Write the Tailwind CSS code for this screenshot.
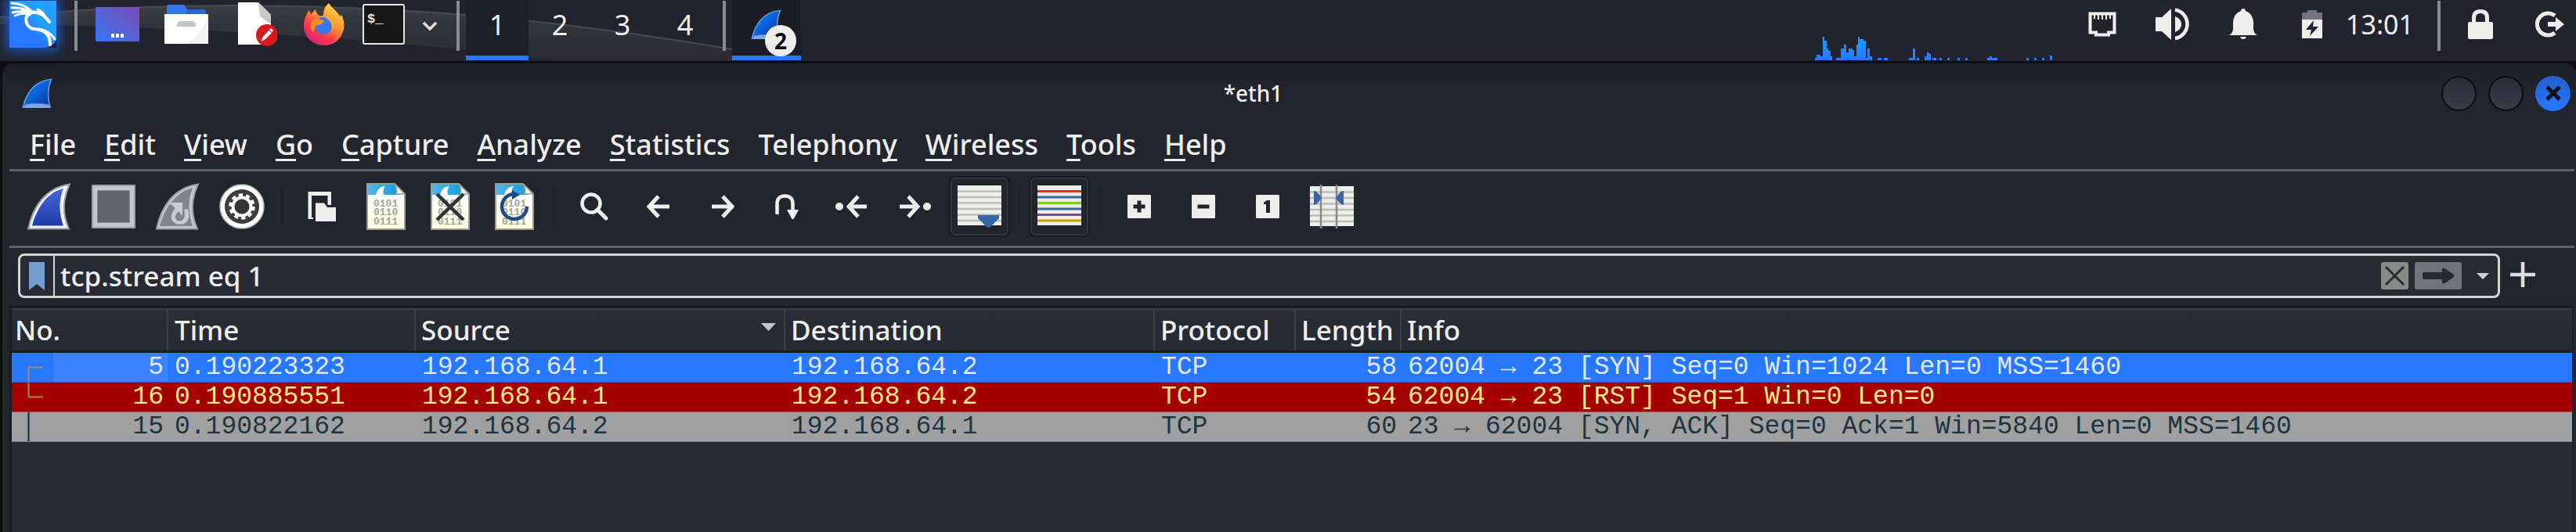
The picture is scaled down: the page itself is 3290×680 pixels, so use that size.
<!DOCTYPE html>
<html lang="en">
<head>
<meta charset="utf-8">
<title>*eth1</title>
<script src="https://cdn.jsdelivr.net/npm/@tailwindcss/browser@4"></script>
</head>
<body class="flex min-h-screen flex-col overflow-x-hidden bg-[#0d0d12] font-['Noto_Sans',sans-serif] text-[#eeeeec]">

<svg class="absolute h-0 w-0" aria-hidden="true">
  <defs>
    <linearGradient id="fin" x1="0" y1="0" x2="1" y2="1"><stop offset="0" stop-color="#1a8cf5"/><stop offset=".5" stop-color="#0a5fd8"/><stop offset="1" stop-color="#0a2f98"/></linearGradient>
    <linearGradient id="page" x1="0" y1="0" x2="0" y2="1"><stop offset=".3" stop-color="#fff"/><stop offset="1" stop-color="#fffde0"/></linearGradient>
    <linearGradient id="sky" x1="0" y1="0" x2="1" y2="0"><stop offset="0" stop-color="#55b5ea"/><stop offset="1" stop-color="#149be0"/></linearGradient>
    <symbol id="sharkfin" viewBox="0 0 40 44">
      <path d="M1.500 42C5 24 15 3 38.500 1.500C34 13 33 27 37 42Z" fill="url(#fin)" stroke="#6fa6dd" stroke-width="1.500"/>
      <path d="M3 42L4 38Q20 35 35.500 38L36.500 42Z" fill="#9cc0f5" opacity=".75"/>
    </symbol>
    <symbol id="capfile" viewBox="0 0 50 60">
      <path d="M1 1H36L49 14V59H1Z" fill="url(#page)" stroke="#9c9e90" stroke-width="2"/>
      <path d="M2 2H36L42 15H2Z" fill="url(#sky)"/>
      <path d="M12 16C13 9 17 4 24 4C21 8 21 12 22 16Z" fill="#fff"/>
      <path d="M36 1L49 14H38Q40 8 36 1Z" fill="#f3f3e6" stroke="#9c9e90" stroke-width="1.500"/>
      <g font-family="Liberation Mono, monospace" font-size="13" font-weight="bold" fill="#a6a698"><text x="9" y="30">0101</text><text x="9" y="41">0110</text><text x="9" y="53">0111</text></g>
    </symbol>
  </defs>
</svg>

<!-- desktop panel -->
<header class="relative flex h-[81px] items-center border-b-3 border-[#0d0d12] bg-[#22232e]">
  <svg class="absolute top-0 left-0 h-[78px] w-[1060px]" viewBox="0 0 1060 78" aria-hidden="true">
    <defs><linearGradient id="swoosh" x1="0" y1="0" x2="0" y2="1"><stop offset="0" stop-color="#3d3e45"/><stop offset=".35" stop-color="#32343a"/><stop offset="1" stop-color="#292a32"/></linearGradient></defs>
    <path d="M0 22C180 2 420 2 640 23C800 39 900 57 1000 74V78H720C560 58 300 34 0 31Z" fill="url(#swoosh)"/>
    <path d="M0 22C180 2 420 2 640 23C800 39 900 57 1000 74" fill="none" stroke="#494a50" stroke-width="2"/>
  </svg>
  <nav class="relative flex h-full items-center" aria-label="Launchers">
    <button aria-label="Applications" class="flex h-full w-[84px] items-center justify-center pb-4">
      <svg class="h-[60px] w-[60px] shadow-[0_0_14px_3px_#1d5fd0]" viewBox="0 0 60 60">
        <defs><linearGradient id="kali" x1="0" y1="1" x2="1" y2="0"><stop offset=".4" stop-color="#2777ff"/><stop offset=".6" stop-color="#249fff"/></linearGradient></defs>
        <path d="M0 0H60V48Q58 58 46 60H0Z" fill="url(#kali)"/>
        <g fill="none" stroke="#fff" stroke-linecap="round">
          <path d="M3 3Q18 3 29 14M3 9Q15 8 28 15M4 15Q16 11 27 17M7 19Q17 14 26 18" stroke-width="3"/>
          <path d="M29 15C17 18 20 34 31 36C46 37 52 43 52 56" stroke-width="4"/>
          <path d="M38 36C49 38 54 43 58 49" stroke-width="3"/>
          <path d="M28 15C38 13 46 20 51 27" stroke-width="4"/>
          <path d="M36 11Q43 14 46 21" stroke-width="3"/>
        </g>
      </svg>
    </button>
    <span class="mb-3 ml-[11px] h-16 w-1 bg-[#8b8b92]"></span>
    <button aria-label="Desktop" class="ml-[7px] flex h-full w-[88px] items-center justify-center pb-4">
      <svg class="h-[44px] w-[56px]" viewBox="0 0 56 44"><defs><linearGradient id="desk" x1="0" y1="1" x2="1" y2="0"><stop offset="0" stop-color="#3478f0"/><stop offset="1" stop-color="#7e49b5"/></linearGradient></defs><rect width="56" height="44" rx="1" fill="url(#desk)"/><path d="M20 34h4v5h-4zM26 34h4v5h-4zM32 34h4v5h-4z" fill="#fff"/></svg>
    </button>
    <button aria-label="Files" class="flex h-full w-[88px] items-center justify-center pb-4">
      <svg class="h-[50px] w-[56px]" viewBox="0 0 56 50"><path d="M3 2Q3 0 5 0H24Q26 0 29 6L52 7V14H3Z" fill="#3277ee"/><path d="M29 6H50Q53 6 53 9V14H26Z" fill="#2b66cf"/><rect y="12" width="56" height="38" rx="1" fill="#fff"/><path d="M56 14V50H28Q48 38 56 14Z" fill="#f2f2f2"/><path d="M16 27Q16 21 20 21H36Q40 21 40 27Q40 28 39 28H17Q16 28 16 27Z" fill="#c4c4c4"/></svg>
    </button>
    <button aria-label="Text editor" class="flex h-full w-[88px] items-center justify-center pb-4">
      <svg class="h-[56px] w-[56px]" viewBox="0 0 56 56"><path d="M6 0H32L48 16V54H6Z" fill="#fff"/><path d="M32 0L48 16V28L34 18Z" fill="#c9c9c9"/><circle cx="43" cy="42" r="14" fill="#d61a1e"/><path d="M36 50L37 45L45 36L49 39L41 47Z" fill="#fff"/><path d="M46 35L48 33L51 36L49 38Z" fill="#fff"/></svg>
    </button>
    <button aria-label="Firefox" class="flex h-full w-[88px] items-center justify-center pb-4">
      <svg class="h-[54px] w-[54px]" viewBox="0 0 54 54"><defs><linearGradient id="fox" x1="1" y1="0" x2=".3" y2="1"><stop offset=".1" stop-color="#ffe04a"/><stop offset=".45" stop-color="#ff9a35"/><stop offset=".75" stop-color="#ff3b47"/><stop offset="1" stop-color="#d8207c"/></linearGradient></defs><path d="M33 0C38 8 44 10 47 17L49 15C54 24 53 33 50 39C46 49 37 54 27 54C12 54 1 43 1 29C1 21 4 14 8 9L10 14L16 8Q17 14 21 16Q26 17 26 15C26 8 29 3 33 0Z" fill="url(#fox)"/><circle cx="26" cy="29" r="11" fill="#3a78ea"/><path d="M12 22Q19 18 27 23Q24 28 18 28Q14 31 13 38Q7 29 12 22Z" fill="#ff8a1e"/><path d="M26 17Q34 14 38 20Q42 27 37 36Q38 25 31 20Z" fill="#f5a63c"/></svg>
    </button>
    <button aria-label="Terminal" class="flex h-full w-16 items-center justify-center pb-4">
      <svg class="h-[52px] w-[54px]" viewBox="0 0 54 52"><rect x="1" y="1" width="52" height="50" rx="2" fill="#171717" stroke="#e6e6e3" stroke-width="2"/><text x="6" y="24" fill="#e6e6e3" font-family="Liberation Mono, monospace" font-weight="bold" font-size="17">$_</text></svg>
    </button>
    <button aria-label="More terminals" class="flex h-full w-[54px] items-center justify-center pb-3">
      <svg class="h-3 w-5" viewBox="0 0 20 12"><path d="M2 2L10 10L18 2" fill="none" stroke="#e0e0de" stroke-width="3.500"/></svg>
    </button>
    <span class="mb-3 ml-[7px] h-16 w-1 bg-[#8b8b92]"></span>
  </nav>
  <nav class="relative ml-2 flex h-full text-[36px] leading-[64px]" aria-label="Workspaces">
    <button class="flex h-[77px] w-20 justify-center border-b-6 border-[#2777ff] bg-[#1e1f27]">1</button>
    <button class="flex h-[77px] w-20 justify-center border-b-6 border-transparent">2</button>
    <button class="flex h-[77px] w-20 justify-center border-b-6 border-transparent">3</button>
    <button class="flex h-[77px] w-20 justify-center border-b-6 border-transparent">4</button>
  </nav>
  <span class="relative mb-3 ml-2 h-16 w-1 bg-[#8b8b92]"></span>
  <button aria-label="Wireshark, 2 windows" class="relative mb-px ml-2 h-[77px] w-[88px] border-b-6 border-[#2777ff] bg-[#1b1c26]">
    <svg class="absolute top-3 left-6 h-[39px] w-[39px]" preserveAspectRatio="none" viewBox="0 0 40 44"><use href="#sharkfin" width="40" height="44"/></svg>
    <span class="absolute top-8 left-[42px] flex h-10 w-10 items-center justify-center rounded-full bg-[#eeeeec] text-[28px] leading-none font-bold text-[#111]">2</span>
  </button>
  <div class="ml-auto flex h-full items-center">
    <svg class="mr-[18px] h-[31px] w-[304px] self-end" viewBox="0 0 304 31" aria-label="CPU usage">
      <defs><linearGradient id="cpu" x1="0" y1="0" x2="0" y2="31" gradientUnits="userSpaceOnUse"><stop offset="0" stop-color="#1b9dff"/><stop offset="1" stop-color="#2777ff"/></linearGradient></defs>
      <path fill="url(#cpu)" d="M0 30V27H2V23H7V25H10V0H12V5H15V15H17V18H20V25H22V30ZM27 30V27H33V15H37V10H40V20H43V15H48V17H50V25H53V10H55V0H57V3H62V5H65V27H67V15H70V25H73V30ZM80 27h5v3h-5zM88 27h5v3h-5zM120 27h5V15h3v15h-8zM130 27h3v3h-3zM140 30v-5h3v-5h3v2h2v8zM150 27h5v3h-5zM159 27h3v3h-3zM169 27h3v3h-3zM182 27h3v3h-3zM192 27h3v3h-3zM220 30v-3h3v-2h3v2h7v3zM270 27h3v3h-3zM280 27h3v3h-3zM290 27h3v3h-3zM300 24h3v6h-3z"/>
    </svg>
    <button aria-label="Network" class="flex h-full w-[90px] items-center justify-center pb-4"><svg class="h-8 w-9" viewBox="0 0 36 32"><path d="M2.500 2.500H33.500V26.500H26V29.500H10V26.500H2.500Z" fill="none" stroke="#eeeeec" stroke-width="4"/><path d="M8 4V9M13 4V10M18 4V10M23 4V10M28 4V9" stroke="#eeeeec" stroke-width="2"/></svg></button>
    <button aria-label="Volume" class="flex h-full w-[90px] items-center justify-center pb-4"><svg class="h-[42px] w-11" viewBox="0 0 44 42"><path d="M0 12H8L20 1V41L8 30H0Z" fill="#eeeeec"/><path d="M25 11Q33 14 33 21T25 31Z" fill="#eeeeec"/><path d="M25 2.500A18.500 18.500 0 0 1 25 39" fill="none" stroke="#eeeeec" stroke-width="4.500"/></svg></button>
    <button aria-label="Notifications" class="flex h-full w-[90px] items-center justify-center pb-4"><svg class="h-[40px] w-9" viewBox="0 0 36 40"><path d="M18 0Q21 0 21 3Q30 6 31 17V26Q31 31 36 34H0Q5 31 5 26V17Q6 6 15 3Q15 0 18 0ZM14 36H22Q21 39 18 39T14 36Z" fill="#eeeeec"/></svg></button>
    <button aria-label="Battery charging" class="flex h-full w-[86px] items-center justify-center pb-4"><svg class="h-9 w-[26px]" viewBox="0 0 26 36"><path d="M0 3H7V0H19V3H26V12H0Z" fill="#73747b"/><path d="M0 12H26V36H0Z" fill="#eeeeec"/><path d="M15 13L5 25H12L10 33L21 21H14Z" fill="#22232e"/></svg></button>
    <time class="mb-4 w-[84px] text-[34px] leading-[62px]">13:01</time>
    <span class="mb-3 ml-[33px] h-16 w-1 bg-[#8b8b92]"></span>
    <button aria-label="Lock screen" class="ml-[6px] flex h-full w-[90px] items-center justify-center pb-4"><svg class="h-[38px] w-8" viewBox="0 0 32 38"><rect y="16" width="32" height="22" rx="2" fill="#eeeeec"/><path d="M7.500 18V11Q7.500 2.500 16 2.500T24.500 11V18" fill="none" stroke="#eeeeec" stroke-width="5"/></svg></button>
    <button aria-label="Log out" class="flex h-full w-[77px] items-center justify-end pr-[14px] pb-4"><svg class="h-[34px] w-[38px]" viewBox="0 0 38 34"><path d="M25 6A14 14 0 1 0 25 28" fill="none" stroke="#eeeeec" stroke-width="5"/><path d="M16 14H26V8L37 17L26 26V20H16Z" fill="#eeeeec"/></svg></button>
  </div>
</header>

<!-- Wireshark window -->
<main class="ml-[3px] flex grow flex-col rounded-t-[14px] bg-[#23252e] bg-linear-to-b from-[#1e1f27] to-transparent bg-[length:100%_40px] bg-no-repeat">
  <div class="flex h-[76px] items-center">
    <div class="w-[80px] pl-[25px]"><svg class="h-[39px] w-[39px]" preserveAspectRatio="none" viewBox="0 0 40 44"><use href="#sharkfin" width="40" height="44"/></svg></div>
    <h1 class="grow text-center text-[28px] leading-[36px] font-medium">*eth1</h1>
    <div class="flex w-[172px] gap-[15px]">
      <button aria-label="Minimize" class="h-[45px] w-[45px] rounded-full border-2 border-[#0c0c10] bg-linear-to-b from-[#2a2c36] to-[#383b49]"></button>
      <button aria-label="Maximize" class="h-[45px] w-[45px] rounded-full border-2 border-[#0c0c10] bg-linear-to-b from-[#2a2c36] to-[#383b49]"></button>
      <button aria-label="Close" class="flex h-[45px] w-[45px] items-center justify-center rounded-full bg-linear-to-b from-[#2262cc] to-[#2777ff]"><svg class="h-5 w-[22px]" viewBox="0 0 22 20"><path d="M3 2L19 18M19 2L3 18" stroke="#0a0f1c" stroke-width="5"/></svg></button>
    </div>
  </div>

  <nav class="mr-[2px] ml-[9px] flex h-[62px] items-start border-b-3 border-[#606167] pl-2 text-[36px] leading-[56px] font-medium" aria-label="Menu bar">
    <button class="px-[18px]"><span class="underline decoration-3 underline-offset-5 [text-decoration-skip-ink:none]">F</span>ile</button>
    <button class="px-[18px]"><span class="underline decoration-3 underline-offset-5 [text-decoration-skip-ink:none]">E</span>dit</button>
    <button class="px-[18px]"><span class="underline decoration-3 underline-offset-5 [text-decoration-skip-ink:none]">V</span>iew</button>
    <button class="px-[18px]"><span class="underline decoration-3 underline-offset-5 [text-decoration-skip-ink:none]">G</span>o</button>
    <button class="px-[18px]"><span class="underline decoration-3 underline-offset-5 [text-decoration-skip-ink:none]">C</span>apture</button>
    <button class="px-[18px]"><span class="underline decoration-3 underline-offset-5 [text-decoration-skip-ink:none]">A</span>nalyze</button>
    <button class="px-[18px]"><span class="underline decoration-3 underline-offset-5 [text-decoration-skip-ink:none]">S</span>tatistics</button>
    <button class="px-[18px]">Telephon<span class="underline decoration-3 underline-offset-5 [text-decoration-skip-ink:none]">y</span></button>
    <button class="px-[18px]"><span class="underline decoration-3 underline-offset-5 [text-decoration-skip-ink:none]">W</span>ireless</button>
    <button class="px-[18px]"><span class="underline decoration-3 underline-offset-5 [text-decoration-skip-ink:none]">T</span>ools</button>
    <button class="px-[18px]"><span class="underline decoration-3 underline-offset-5 [text-decoration-skip-ink:none]">H</span>elp</button>
  </nav>

  <div class="mr-[2px] ml-[9px] flex h-[98px] items-center gap-2 border-b-3 border-[#606167] pb-[5px] pl-[14px]" role="toolbar" aria-label="Main toolbar">
    <button aria-label="Start capture" class="flex h-[74px] w-[74px] items-center justify-center"><svg class="h-[60px] w-[58px]" viewBox="0 0 58 60"><defs><linearGradient id="cap" x1="0" y1="0" x2="0" y2="1"><stop offset="0" stop-color="#4a68d8"/><stop offset="1" stop-color="#1f3aa8"/></linearGradient></defs><path d="M2 58.500C8 30 24 6 55 1.500C46 20 45 38 54 58.500Z" fill="#f2f2f0" stroke="#98999c" stroke-width="2"/><path d="M7 54.500C13 32 26 12 47 7C41 22 41 38 47 54.500Z" fill="url(#cap)"/></svg></button>
    <button aria-label="Stop capture" class="flex h-[74px] w-[74px] items-center justify-center"><svg class="h-[56px] w-[56px]" viewBox="0 0 56 56"><rect x="1" y="1" width="54" height="54" fill="#c4c6cf" stroke="#9b9da6" stroke-width="2"/><rect x="7.500" y="7.500" width="41" height="41" fill="#62656d" stroke="#8a8c95" stroke-width="1"/></svg></button>
    <button aria-label="Restart capture" class="flex h-[74px] w-[74px] items-center justify-center"><svg class="h-[60px] w-[58px]" viewBox="0 0 58 60"><path d="M2 58.500C8 30 24 6 55 1.500C46 20 45 38 54 58.500Z" fill="#c4c6cf" stroke="#9b9da6" stroke-width="2"/><path d="M6 55C12 32 26 12 48 6C42 22 42 38 48 55Z" fill="#82848c"/><path d="M18 25H35V42L30 36Q25 41 26 45Q29 50 34 48Q40 45 37 34L42 33Q46 48 37 52Q25 55 21 46Q20 38 26 32Z" fill="#c9ccd8"/></svg></button>
    <button aria-label="Capture options" class="flex h-[74px] w-[74px] items-center justify-center"><svg class="h-[60px] w-[60px]" viewBox="0 0 60 60"><circle cx="30" cy="30" r="28" fill="#fff" stroke="#b9b9b9" stroke-width="1.500"/><circle cx="30" cy="30" r="22" fill="#3c3c3c"/><circle cx="30" cy="30" r="14.500" fill="none" stroke="#fff" stroke-width="4.500" stroke-dasharray="5.100 4.010"/><circle cx="30" cy="30" r="11.500" fill="#333" stroke="#fff" stroke-width="4"/></svg></button>
    <span class="flex h-12 w-3 justify-center"><i class="w-[2px] bg-[#1f212a]"></i></span>
    <button aria-label="Open" class="flex h-[74px] w-[74px] items-center justify-center"><svg class="h-[38px] w-9" viewBox="0 0 36 38"><path d="M2.500 33H7V35H0.500V0H30V17H25.500V5H5V33Z" fill="#eeeeec"/><path d="M10 14.500H21L25 20H36V38H10Z" fill="#eeeeec"/></svg></button>
    <button aria-label="Save" class="flex h-[74px] w-[74px] items-center justify-center"><svg class="h-[60px] w-[50px]"><use href="#capfile"/></svg></button>
    <button aria-label="Close file" class="flex h-[74px] w-[74px] items-center justify-center"><svg class="h-[60px] w-[50px]" viewBox="0 0 50 60"><use href="#capfile" width="50" height="60"/><path d="M8 14L42 47M42 14L8 47" stroke="#2e3436" stroke-width="4.500"/></svg></button>
    <button aria-label="Reload file" class="flex h-[74px] w-[74px] items-center justify-center"><svg class="h-[60px] w-[50px]" viewBox="0 0 50 60"><use href="#capfile" width="50" height="60"/><path d="M24 14A16 16 0 1 0 41 30" fill="none" stroke="#204a87" stroke-width="4.500"/><path d="M22 9L32 15L22 21Z" fill="#204a87"/></svg></button>
    <span class="flex h-12 w-3 justify-center"><i class="w-[2px] bg-[#1f212a]"></i></span>
    <button aria-label="Find packet" class="flex h-[74px] w-[74px] items-center justify-center"><svg class="h-9 w-9" viewBox="0 0 36 36"><circle cx="14" cy="14" r="11.500" fill="none" stroke="#eeeeec" stroke-width="4.500"/><path d="M22 22L33 33" stroke="#eeeeec" stroke-width="5" stroke-linecap="round"/></svg></button>
    <button aria-label="Previous packet" class="flex h-[74px] w-[74px] items-center justify-center"><svg class="h-[30px] w-[30px]" viewBox="0 0 30 30"><path d="M29 15H4M15 2L3 15L15 28" fill="none" stroke="#eeeeec" stroke-width="5"/></svg></button>
    <button aria-label="Next packet" class="flex h-[74px] w-[74px] items-center justify-center"><svg class="h-[30px] w-[30px]" viewBox="0 0 30 30"><path d="M1 15H26M15 2L27 15L15 28" fill="none" stroke="#eeeeec" stroke-width="5"/></svg></button>
    <button aria-label="Go to packet" class="flex h-[74px] w-[74px] items-center justify-center"><svg class="h-8 w-[30px]" viewBox="0 0 30 32"><path d="M2.500 26V12Q3 2.500 12.500 2.500T22.500 12V21" fill="none" stroke="#eeeeec" stroke-width="4.500"/><path d="M15 20H30L23.500 32H21.500Z" fill="#eeeeec"/></svg></button>
    <button aria-label="First packet" class="flex h-[74px] w-[74px] items-center justify-center"><svg class="h-[30px] w-10" viewBox="0 0 40 30"><circle cx="5" cy="15" r="5" fill="#eeeeec"/><path d="M40 15H18M29 2L17 15L29 28" fill="none" stroke="#eeeeec" stroke-width="5"/></svg></button>
    <button aria-label="Last packet" class="flex h-[74px] w-[74px] items-center justify-center"><svg class="h-[30px] w-10" viewBox="0 0 40 30"><circle cx="35" cy="15" r="5" fill="#eeeeec"/><path d="M0 15H22M11 2L23 15L11 28" fill="none" stroke="#eeeeec" stroke-width="5"/></svg></button>
    <button aria-label="Auto scroll" aria-pressed="true" class="flex h-[74px] w-[74px] items-center justify-center rounded-md border-2 border-[#34363f] bg-[#22242b] outline-2 outline-[#191a22]"><svg class="h-[56px] w-[56px]" viewBox="0 0 56 56"><path d="M0 1H56V52H0Z" fill="#eeeeec"/><path d="M0 8.500H56M0 16H56M0 23.500H56M0 31H56M0 38.500H56M0 46H56" stroke="#bcbdb6" stroke-width="2.500"/><path d="M26 39H53V43L43 53Q39.500 56 36 53L26 43Z" fill="#3465a4"/></svg></button>
    <span class="flex h-12 w-3 justify-center"><i class="w-[2px] bg-[#1f212a]"></i></span>
    <button aria-label="Colorize" aria-pressed="true" class="flex h-[74px] w-[74px] items-center justify-center rounded-md border-2 border-[#34363f] bg-[#22242b] outline-2 outline-[#191a22]"><svg class="h-[56px] w-[56px]" viewBox="0 0 56 56"><path d="M0 1H56V52H0Z" fill="#eeeeec"/><g stroke-width="3"><path d="M0 8.500H56" stroke="#ef2929"/><path d="M0 16H56" stroke="#3465a4"/><path d="M0 23.500H56" stroke="#73d216"/><path d="M0 31H56" stroke="#3465a4"/><path d="M0 38.500H56" stroke="#75507b"/><path d="M0 46H56" stroke="#c4a000"/></g></svg></button>
    <span class="flex h-12 w-3 justify-center"><i class="w-[2px] bg-[#1f212a]"></i></span>
    <button aria-label="Zoom in" class="flex h-[74px] w-[74px] items-center justify-center"><svg class="h-[30px] w-[30px]" viewBox="0 0 30 30"><rect width="30" height="30" rx="1" fill="#eeeeec"/><path d="M7.500 15H22.500M15 7.500V22.500" stroke="#23252e" stroke-width="5"/></svg></button>
    <button aria-label="Zoom out" class="flex h-[74px] w-[74px] items-center justify-center"><svg class="h-[30px] w-[30px]" viewBox="0 0 30 30"><rect width="30" height="30" rx="1" fill="#eeeeec"/><path d="M7.500 15H22.500" stroke="#23252e" stroke-width="5"/></svg></button>
    <button aria-label="Normal size" class="flex h-[74px] w-[74px] items-center justify-center"><svg class="h-[30px] w-[30px]" viewBox="0 0 30 30"><rect width="30" height="30" rx="1" fill="#eeeeec"/><path d="M10 10L14 7H18V23H13V12H10Z" fill="#23252e"/></svg></button>
    <button aria-label="Resize columns" class="flex h-[74px] w-[74px] items-center justify-center"><svg class="h-[56px] w-[56px]" viewBox="0 0 56 56"><path d="M0 2H56V53H0Z" fill="#eeeeec"/><path d="M0 9.500H56M0 17H56M0 24.500H56M0 32H56M0 39.500H56M0 47H56" stroke="#bcbdb6" stroke-width="2.500"/><path d="M14 0V56M34 0V56" stroke="#888a85" stroke-width="2.500"/><path d="M5 8Q9 8 15 17Q9 26 5 26ZM43 8Q39 8 33 17Q39 26 43 26Z" fill="#3465a4"/></svg></button>
  </div>

  <form class="flex h-[73px] items-start pt-[7px] pr-[52px] pl-5" onsubmit="return false">
    <div class="flex h-[57px] grow items-center rounded-lg border-3 border-[#d3d3cf] bg-[#282a35]">
      <button type="button" aria-label="Filter bookmarks" class="flex h-full w-[44px] items-center justify-center border-r-2 border-[#d3d3cf]"><svg class="h-9 w-5" viewBox="0 0 20 36"><path d="M0 0H20V36L10 28L0 36Z" fill="#729fcf"/></svg></button>
      <input aria-label="Display filter" class="h-full min-w-0 grow bg-transparent pl-[7px] text-[35px] font-medium text-[#eeeeec] outline-none" value="tcp.stream eq 1" spellcheck="false">
      <button type="button" aria-label="Clear filter" class="mr-2"><svg class="h-[35px] w-[35px]" viewBox="0 0 35 35"><rect width="35" height="35" rx="3" fill="#888a85"/><path d="M6 6L29 29M29 6L6 29" stroke="#282a35" stroke-width="3"/></svg></button>
      <button type="submit" aria-label="Apply filter" class="mr-[19px]"><svg class="h-[35px] w-[60px]" viewBox="0 0 60 35"><rect width="60" height="35" rx="3" fill="#6f737d"/><path d="M10 14Q10 13 12 13H35V8Q38 7 40 9L50 16Q51 18 50 19L40 26Q38 28 35 27V22H12Q10 22 10 20Z" fill="#262832"/></svg></button>
      <button type="button" aria-label="Filter history" class="mr-[11px]"><svg class="h-[10px] w-4" viewBox="0 0 16 10"><path d="M0 1H16L8 9Z" fill="#d3d3cf"/></svg></button>
    </div>
    <button type="button" aria-label="Add filter button" class="mt-[11px] ml-[13px]"><svg class="h-8 w-8" viewBox="0 0 32 32"><path d="M0 16H32M16 0V32" stroke="#dededb" stroke-width="4.500"/></svg></button>
  </form>

  <section class="mr-1 ml-[9px] grow border-t-4 border-r-1 border-l-3 border-[#1b1b25] bg-[#282a35]">
    <table class="w-full table-fixed border-collapse text-left">
      <colgroup><col class="w-[199px]"><col class="w-[316px]"><col class="w-[472px]"><col class="w-[472px]"><col class="w-[180px]"><col class="w-[135px]"><col></colgroup>
      <thead class="bg-linear-to-b from-[#2a2d36] to-[#252931] text-[35px] leading-[52px]">
        <tr class="border-t-2 border-b-3 border-t-[#3a3c46] border-b-[#1b1b25]">
          <th class="border-r-2 border-[#3d3f48] pl-1 font-medium">No.</th>
          <th class="border-r-2 border-[#3d3f48] pl-2 font-medium">Time</th>
          <th class="border-r-2 border-[#3d3f48] pl-[7px] font-medium"><div class="flex items-center justify-between pr-[10px]">Source<svg class="mb-2 h-[10px] w-[19px]" viewBox="0 0 19 10"><path d="M0 0H19L9.500 10Z" fill="#c6c6c6"/></svg></div></th>
          <th class="border-r-2 border-[#3d3f48] pl-[7px] font-medium">Destination</th>
          <th class="border-r-2 border-[#3d3f48] pl-[7px] font-medium">Protocol</th>
          <th class="border-r-2 border-[#3d3f48] pl-[7px] font-medium">Length</th>
          <th class="pl-[7px] font-medium">Info</th>
        </tr>
      </thead>
      <tbody class="font-['Liberation_Mono',monospace] text-[33px] leading-[37px] whitespace-pre">
        <tr class="border-b border-[#4a4fae] bg-[#2777ff] text-[#dfe8fb]">
          <td><div class="flex h-[37px]"><svg class="h-[37px] w-[53px]" viewBox="0 0 53 37"><path d="M40 18.500H21.500V38" fill="none" stroke="#948e74" stroke-width="2"/></svg><span class="grow bg-[#3a82ff] pr-[5px] text-right">5</span></div></td>
          <td class="pl-[9px]">0.190223323</td><td class="pl-[9px]">192.168.64.1</td><td class="pl-[9px]">192.168.64.2</td><td class="pl-[9px]">TCP</td><td class="pr-[5px] text-right">58</td><td class="pl-[9px]">62004 → 23 [SYN] Seq=0 Win=1024 Len=0 MSS=1460</td>
        </tr>
        <tr class="border-b border-[#a25050] bg-[#a40000] text-[#fce58c]">
          <td><div class="flex h-[37px]"><svg class="h-[37px] w-[53px]" viewBox="0 0 53 37"><path d="M40 18.500H21.500V0" fill="none" stroke="#a8805c" stroke-width="2"/></svg><span class="grow pr-[5px] text-right">16</span></div></td>
          <td class="pl-[9px]">0.190885551</td><td class="pl-[9px]">192.168.64.1</td><td class="pl-[9px]">192.168.64.2</td><td class="pl-[9px]">TCP</td><td class="pr-[5px] text-right">54</td><td class="pl-[9px]">62004 → 23 [RST] Seq=1 Win=0 Len=0</td>
        </tr>
        <tr class="border-b border-[#75767b] bg-[#a0a0a0] text-[#1e3440]">
          <td><div class="flex h-[37px]"><svg class="h-[37px] w-[53px]" viewBox="0 0 53 37"><path d="M21.500 0V37" fill="none" stroke="#12272e" stroke-width="2"/></svg><span class="grow pr-[5px] text-right">15</span></div></td>
          <td class="pl-[9px]">0.190822162</td><td class="pl-[9px]">192.168.64.2</td><td class="pl-[9px]">192.168.64.1</td><td class="pl-[9px]">TCP</td><td class="pr-[5px] text-right">60</td><td class="pl-[9px]">23 → 62004 [SYN, ACK] Seq=0 Ack=1 Win=5840 Len=0 MSS=1460</td>
        </tr>
      </tbody>
    </table>
  </section>
</main>
</body>
</html>
